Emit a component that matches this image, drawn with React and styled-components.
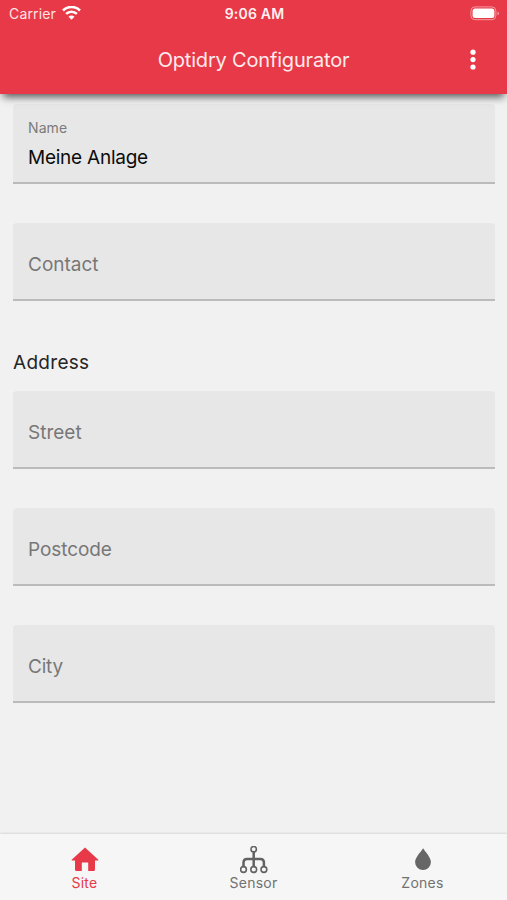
import React from 'react'
import styled, { createGlobalStyle } from 'styled-components';

const GlobalStyle = createGlobalStyle`
    * {
      box-sizing: border-box;
    }
    body {
      margin: 0;
      background: #f1f1f1;
      font-family: Inter, "Liberation Sans", sans-serif;
    }
`
const Screen = styled.div`
    display: flex;
    flex-direction: column;
    width: 507px;
    height: 900px;
    overflow: hidden;
    background: #f1f1f1;
`
const Header = styled.header`
    flex: none;
    height: 94px;
    background: #e73947;
    color: #fff;
    box-shadow: 0 6px 8px -3px rgba(0, 0, 0, .65);
    z-index: 1;
`
const StatusBar = styled.div`
    display: grid;
    grid-template-columns: 1fr auto 1fr;
    align-items: center;
    height: 27px;
    padding: 0 7px 0 9px;
`
const Carrier = styled.div`
    display: flex;
    align-items: center;
    gap: 6px;
    font-size: 14px;
    letter-spacing: .15px;
    color: #ffe3e5;
`
const Clock = styled.div`
    font-size: 14px;
    font-weight: 600;
    letter-spacing: .2px;
    color: #ffeff0;
`
const Battery = styled.div`
    justify-self: end;
    display: flex;
`
const TitleBar = styled.div`
    display: grid;
    grid-template-columns: 69px 1fr 69px;
    align-items: center;
    height: 66px;
`
const Title = styled.h1`
    grid-column: 2;
    margin: 0;
    text-align: center;
    font-size: 20px;
    font-weight: 400;
    letter-spacing: -.18px;
    color: #ffebec;
`
const MenuButton = styled.button`
    display: flex;
    justify-self: center;
    padding: 0;
    border: 0;
    background: none;
`
const Form = styled.main`
    flex: 1;
    display: flex;
    flex-direction: column;
    padding: 10px 12px 0 13px;
`
const Field = styled.label`
    display: flex;
    flex-direction: column;
    justify-content: center;
    height: ${props => props.$height || 78}px;
    margin-bottom: ${props => props.$gap}px;
    padding: 7px 15px 0;
    border-bottom: 2px solid #bbb;
    border-radius: 4px 4px 0 0;
    background: #e7e7e7;
`
const FloatingLabel = styled.span`
    height: 22px;
    font-size: 14px;
    line-height: 14px;
    letter-spacing: .1px;
    color: #7b7b7b;
`
const Value = styled.span`
    font-size: 19px;
    line-height: 30px;
    letter-spacing: ${props => props.$spacing || 0}px;
    color: ${props => props.$filled ? '#0c0c0c' : '#777'};
`
const SectionTitle = styled.h2`
    height: 30px;
    margin: 0 0 13px;
    font-size: 19px;
    font-weight: 400;
    line-height: 30px;
    letter-spacing: .3px;
    color: #252525;
`
const TabBar = styled.nav`
    flex: none;
    display: grid;
    grid-template-columns: repeat(3, 1fr);
    height: 66px;
    background: #f6f6f6;
    box-shadow: 0 -1px 2px rgba(0, 0, 0, .1);
`
const Tab = styled.div`
    display: flex;
    flex-direction: column;
    align-items: center;
    padding-top: 12px;
    font-size: 14px;
    line-height: 18px;
    letter-spacing: .25px;
    color: ${props => props.$active ? '#e73947' : '#717171'};

    svg {
      display: block;
      flex: none;
    }
`

const WifiIcon = () => (
  <svg width="19" height="15" viewBox="0 0 19 15" fill="none" stroke="#fff" strokeWidth="2.5">
    <path d="M1 4.5a12 12 0 0 1 17 0" />
    <path d="M4.1 7.9a7.6 7.6 0 0 1 10.8 0" />
    <path d="M9.5 13.8 6.5 10.8a4.25 4.25 0 0 1 6 0Z" fill="#fff" stroke="none" />
  </svg>
)

const BatteryIcon = () => (
  <svg width="30" height="15" viewBox="0 0 30 15">
    <rect x=".9" y=".9" width="25" height="12.8" rx="4" fill="none" stroke="#f49aa1" />
    <rect x="2.6" y="2.6" width="21.8" height="9.4" rx="2.5" fill="#fff" />
    <path d="M27.5 5.4c2.1.7 2.1 3.1 0 3.8Z" fill="#f49aa1" />
  </svg>
)

const DotsIcon = () => (
  <svg width="8" height="24" viewBox="0 0 8 24" fill="#fff">
    <circle cx="4" cy="4.2" r="2.6" />
    <circle cx="4" cy="11.6" r="2.6" />
    <circle cx="4" cy="19" r="2.6" />
  </svg>
)

const HomeIcon = () => (
  <svg width="28" height="28" viewBox="0 0 28 28" fill="currentColor">
    <path d="M14 1.5 27.3 13.700q.5.7-.3.7H24v9q0 1.500-1.500 1.500h-5.300v-8.500h-6.400v8.500H5.500Q4 24.900 4 23.400V14.400H1q-.8 0-.3-.7Z" />
  </svg>
)

const SensorIcon = () => (
  <svg width="28" height="28" viewBox="0 0 28 28" fill="none" stroke="#626262">
    <path d="M13.700 6V20.500M3.500 20.500v-4q0-3.500 3.500-3.500h13.400q3.500 0 3.500 3.500v4" strokeWidth="2.500" />
    <g fill="#f6f6f6" strokeWidth="1.600">
      <circle cx="13.700" cy="3.200" r="2.700" />
      <circle cx="3.500" cy="23.500" r="2.900" />
      <circle cx="13.700" cy="23.500" r="2.900" />
      <circle cx="23.900" cy="23.500" r="2.900" />
    </g>
  </svg>
)

const DropIcon = () => (
  <svg width="28" height="28" viewBox="0 0 28 28" fill="#666">
    <path d="M14.100 2.300C16.500 6.200 21.900 11.300 21.900 16.200a7.900 7.700 0 0 1-15.800 0C6.100 11.300 11.800 6.300 14.100 2.300Z" />
  </svg>
)

const addressFields = [
  { label: 'Street', spacing: 0, gap: 39 },
  { label: 'Postcode', spacing: -.08, gap: 39 },
  { label: 'City', spacing: -.2, gap: 0 },
]

function App() {
  return (
    <Screen>
        <GlobalStyle />
        <Header>
            <StatusBar>
                <Carrier>
                    <span>Carrier</span>
                    <WifiIcon />
                </Carrier>
                <Clock>9:06 AM</Clock>
                <Battery><BatteryIcon /></Battery>
            </StatusBar>
            <TitleBar>
                <Title>Optidry Configurator</Title>
                <MenuButton aria-label="Menu"><DotsIcon /></MenuButton>
            </TitleBar>
        </Header>
        <Form>
            <Field $height={80} $gap={39}>
                <FloatingLabel>Name</FloatingLabel>
                <Value $filled $spacing={-.24}>Meine Anlage</Value>
            </Field>
            <Field $gap={47}>
                <Value>Contact</Value>
            </Field>
            <SectionTitle>Address</SectionTitle>
            {addressFields.map(field => (
                <Field key={field.label} $gap={field.gap}>
                    <Value $spacing={field.spacing}>{field.label}</Value>
                </Field>
            ))}
        </Form>
        <TabBar>
            <Tab $active>
                <HomeIcon />
                <span>Site</span>
            </Tab>
            <Tab>
                <SensorIcon />
                <span>Sensor</span>
            </Tab>
            <Tab>
                <DropIcon />
                <span>Zones</span>
            </Tab>
        </TabBar>
    </Screen>
  )
}

export default App
